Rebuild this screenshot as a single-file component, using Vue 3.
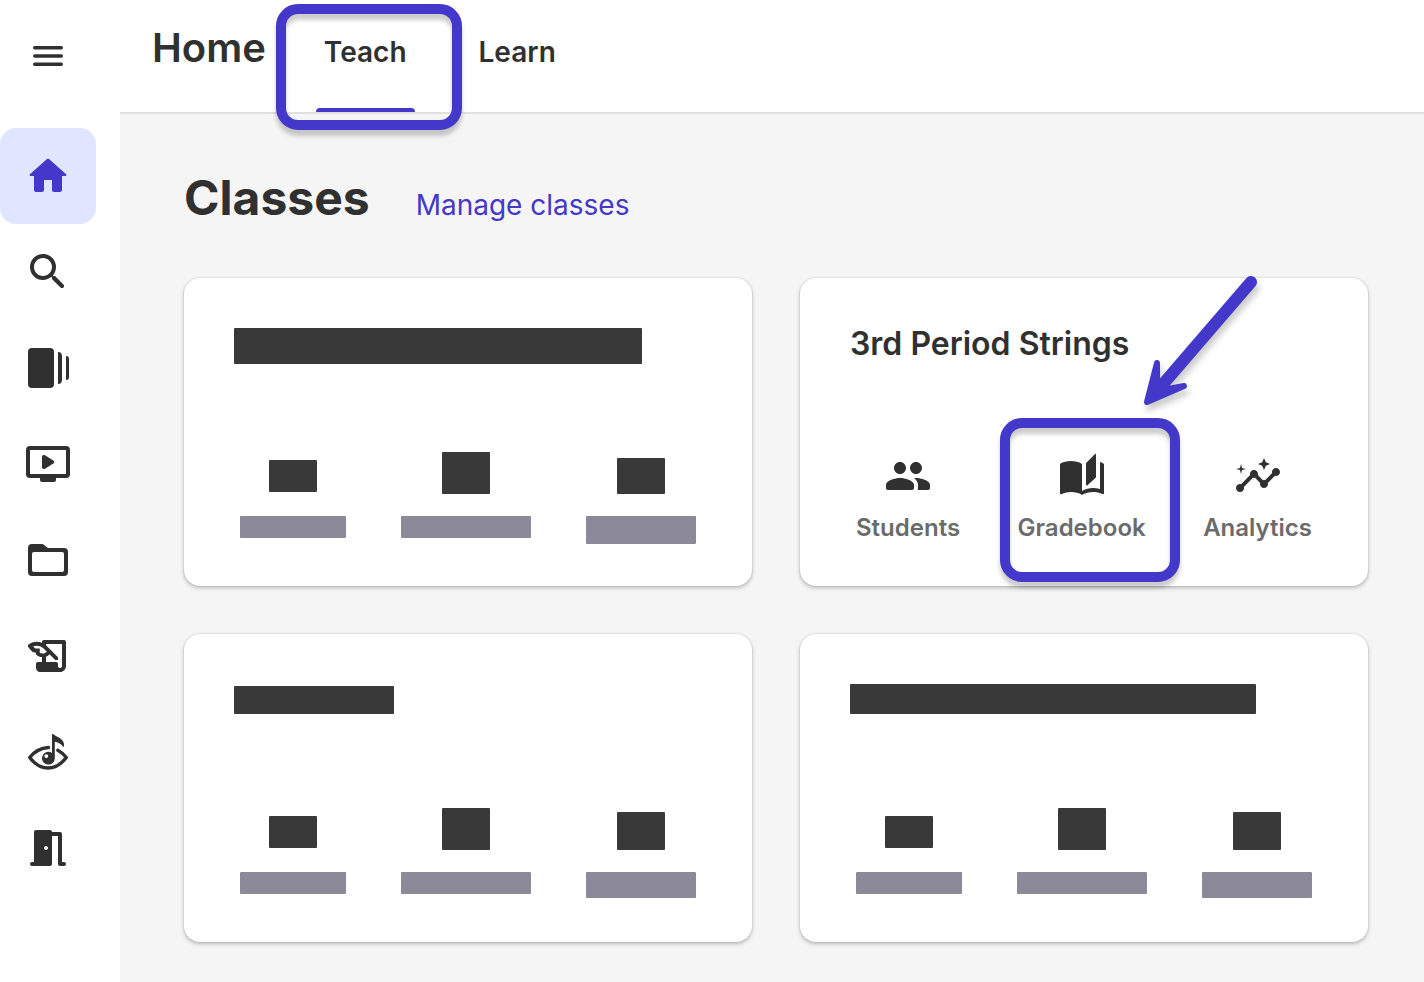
<script setup>
const tabs = [
  { label: 'Teach', active: true },
  { label: 'Learn', active: false },
]

const navItems = [
  { id: 'home', label: 'Home', active: true },
  { id: 'search', label: 'Search' },
  { id: 'library', label: 'Library' },
  { id: 'videos', label: 'Videos' },
  { id: 'files', label: 'Files' },
  { id: 'scores', label: 'Composition' },
  { id: 'sight', label: 'Sight reading' },
  { id: 'rooms', label: 'Practice rooms' },
]

const columns = (thirdY, thirdH, thirdLabel) => [
  { y: 8, h: 32, w: 106, lh: 22 },
  { y: 0, h: 42, w: 130, lh: 22 },
  { y: thirdY, h: thirdH, w: 110, lh: thirdLabel },
]

const cards = [
  { id: 1, bar: { w: 408, y: 0, h: 36 }, blocks: columns(6, 36, 28) },
  { id: 2, title: '3rd Period Strings', actions: ['Students', 'Gradebook', 'Analytics'] },
  { id: 3, bar: { w: 160, y: 2, h: 28 }, blocks: columns(4, 38, 26) },
  { id: 4, bar: { w: 406, y: 0, h: 30 }, blocks: columns(4, 38, 26) },
]
</script>

<template>
  <div class="app">
    <nav class="sidebar" aria-label="Main">
      <button class="menu" type="button" aria-label="Menu">
        <svg class="icon" viewBox="0 0 48 48">
          <path d="M10.700 15.700h26.600M10.700 24h26.600M10.700 32.300h26.600" fill="none" stroke="currentColor" stroke-width="3.400" stroke-linecap="round" />
        </svg>
      </button>
      <a v-for="item in navItems" :key="item.id" href="#" class="nav-item" :class="{ active: item.active }" :aria-label="item.label">
        <svg v-if="item.id === 'home'" class="icon" viewBox="0 0 24 24">
          <path d="M10 19v-5h4v5c0 .55.45 1 1 1h3c.55 0 1-.45 1-1v-7h1.700c.46 0 .68-.57.33-.87L12.670 3.600c-.38-.34-.96-.34-1.340 0l-8.360 7.530c-.34.3-.13.87.33.87H5v7c0 .55.45 1 1 1h3c.55 0 1-.45 1-1z" />
        </svg>
        <svg v-else-if="item.id === 'search'" class="icon" viewBox="0 0 24 24">
          <path d="M15.500 14h-.79l-.28-.27c1.200-1.400 1.820-3.310 1.480-5.340-.47-2.780-2.790-5-5.590-5.340-4.230-.52-7.790 3.040-7.270 7.270.34 2.800 2.560 5.120 5.340 5.590 2.030.34 3.940-.28 5.340-1.480l.27.28v.79l4.250 4.250c.41.41 1.080.41 1.490 0 .41-.41.41-1.080 0-1.490L15.500 14zm-6 0C7.010 14 5 11.990 5 9.500S7.010 5 9.500 5 14 7.010 14 9.500 11.990 14 9.500 14z" />
        </svg>
        <svg v-else-if="item.id === 'library'" class="icon" viewBox="0 0 48 48">
          <rect x="4" y="4" width="26" height="40" rx="4" />
          <path d="M34 8c2.500 0 4 1.500 4 4v24c0 2.500-1.500 4-4 4zM42 12c2 0 3 1.200 3 3v18c0 1.800-1 3-3 3z" />
        </svg>
        <svg v-else-if="item.id === 'videos'" class="icon" viewBox="0 0 48 48">
          <rect x="4" y="8" width="40" height="28" rx="2" fill="none" stroke="currentColor" stroke-width="4" />
          <path d="M16 37h16v3a2 2 0 0 1-2 2H18a2 2 0 0 1-2-2zM18 17v10c0 1.800 1.500 2.600 3 1.800l8.300-5.200c1.200-.8 1.200-2.400 0-3.200L21 15.200c-1.500-.8-3 0-3 1.800z" />
        </svg>
        <svg v-else-if="item.id === 'files'" class="icon" viewBox="0 0 48 48">
          <path fill-rule="evenodd" d="M8 8h9.600c1.100 0 2 .4 2.800 1.200L24 12h16a4 4 0 0 1 4 4v20a4 4 0 0 1-4 4H8a4 4 0 0 1-4-4V12a4 4 0 0 1 4-4zM10 16a2 2 0 0 0-2 2v16c0 1.100.9 2 2 2h28a2 2 0 0 0 2-2V18a2 2 0 0 0-2-2z" />
        </svg>
        <svg v-else-if="item.id === 'scores'" class="icon" viewBox="0 0 24 24">
          <path d="M10 4c-.6 0-1 .4-1 1v.38c-.83-.33-1.720-.5-2.610-.5-1.400 0-2.800.4-4 1.250-.5.4-.6 1-.2 1.450L3.300 9c.5.600 1.200 1.150 2 1.260h.58v.31c0 .3.100.6.300.8.800.750 1.800 1.110 2.810 1.160V15H7c-.6 0-1 .4-1 1v2c0 1.100.9 2 2 2h10c1.660 0 3-1.340 3-3V5c0-.6-.4-1-1-1zM7.890 10.410V8.260H5.610L4.570 7.220C5.140 7 5.760 6.880 6.390 6.880c1.340 0 2.590.52 3.540 1.460l1.410 1.410-.2.2c-.51.51-1.190.8-1.920.8-.47 0-.93-.12-1.330-.34zM19 17c0 .55-.45 1-1 1s-1-.45-1-1v-1c0-.6-.4-1-1-1h-5v-2.590c.57-.23 1.100-.57 1.560-1.030l.2-.2L15.590 14H17v-1.410l-6-5.970V6h8z" />
        </svg>
        <svg v-else-if="item.id === 'sight'" class="icon" viewBox="0 0 48 48">
          <path d="M24.500 19.500C16.500 20 10 24 5.700 29.500 11 36.500 17 40 24 40s13-3.500 18.300-10.500c-2.500-3.200-5.300-5.600-8.500-7.300" fill="none" stroke="currentColor" stroke-width="3.400" stroke-linecap="round" stroke-linejoin="round" />
          <path fill-rule="evenodd" d="M28 6.500c.5-.8 1.200-.4 1.800 0 1.900 1.800 5 2.700 7.400 4.700 2.700 2.200 3.500 5.500 2.400 8-2-3.300-5.800-5-8.800-5.500V29.700A6.400 6.400 0 1 1 28 24.900zM22.300 26.200a1.900 1.900 0 1 0 .01 0z" />
        </svg>
        <svg v-else class="icon" viewBox="0 0 48 48">
          <path fill-rule="evenodd" d="M12 6h14a2 2 0 0 1 2 2h8a2 2 0 0 1 2 2v28h2a2 2 0 0 1 0 4h-4a2 2 0 0 1-2-2V12h-6v28a2 2 0 0 1-2 2H8a2 2 0 0 1 0-4h2V8a2 2 0 0 1 2-2zM22 22a2 2 0 1 0 .01 0z" />
        </svg>
      </a>
    </nav>

    <div class="content">
      <header class="topbar">
        <h1 class="page-title">Home</h1>
        <nav class="tabs" aria-label="Sections">
          <a v-for="tab in tabs" :key="tab.label" href="#" class="tab" :class="{ current: tab.active }">
            {{ tab.label }}
            <span v-if="tab.active" class="ring tab-ring"></span>
          </a>
        </nav>
      </header>

      <main class="main">
        <div class="heading">
          <h2 class="section-title">Classes</h2>
          <a href="#" class="manage">Manage classes</a>
        </div>

        <div class="cards">
          <section v-for="card in cards" :key="card.id" class="card">
            <div class="card-head">
              <h3 v-if="card.title" class="card-title">{{ card.title }}</h3>
              <svg v-else class="title-bar" height="40" :width="card.bar.w">
                <rect :y="card.bar.y" :width="card.bar.w" :height="card.bar.h" rx="1" />
              </svg>
            </div>
            <div v-if="card.actions" class="actions">
              <button v-for="action in card.actions" :key="action" type="button" class="action">
                <svg v-if="action === 'Students'" class="icon" viewBox="0 0 24 24">
                  <path d="M16 11c1.660 0 2.990-1.340 2.990-3S17.660 5 16 5s-3 1.340-3 3 1.340 3 3 3zm-8 0c1.660 0 2.990-1.340 2.990-3S9.660 5 8 5 5 6.340 5 8s1.340 3 3 3zm0 2c-2.330 0-7 1.170-7 3.500V18c0 .55.45 1 1 1h12c.55 0 1-.45 1-1v-1.500c0-2.330-4.670-3.500-7-3.500zm8 0c-.29 0-.62.02-.97.05.02.01.03.03.04.04 1.140.83 1.930 1.940 1.930 3.410V18c0 .35-.07.69-.18 1H22c.55 0 1-.45 1-1v-1.500c0-2.330-4.670-3.500-7-3.500z" />
                </svg>
                <svg v-else-if="action === 'Gradebook'" class="icon" viewBox="0 0 24 24">
                  <path d="M19 1.200c0-.3-.3-.4-.5-.2l-4.200 4.200c-.2.200-.3.400-.3.700v10.500c0 .4.400.5.600.3l4.100-3.700c.2-.2.300-.4.300-.6zM1 6v14.650c0 .25.25.5.5.5.1 0 .15-.05.25-.05C3.100 20.450 5.050 20 6.500 20c1.950 0 4.050.4 5.500 1.500 1.350-.85 3.800-1.500 5.500-1.500 1.650 0 3.350.3 4.750 1.050.1.050.15.050.25.050.25 0 .5-.25.5-.5V6c-.6-.45-1.250-.75-2-1v13.500c-1.100-.35-2.300-.5-3.500-.5-1.700 0-4.150.65-5.500 1.500V6c-1.450-1.100-3.550-1.500-5.500-1.500S2.450 4.900 1 6z" />
                </svg>
                <svg v-else class="icon" viewBox="0 0 24 24">
                  <path d="M21 8c-1.450 0-2.260 1.440-1.930 2.510l-3.550 3.560c-.3-.09-.74-.09-1.040 0l-2.550-2.550C12.270 10.450 11.460 9 10 9c-1.450 0-2.270 1.440-1.930 2.520l-4.560 4.550C2.440 15.740 1 16.550 1 18c0 1.100.9 2 2 2 1.450 0 2.260-1.440 1.930-2.510l4.550-4.560c.3.09.74.09 1.040 0l2.550 2.550C12.730 16.550 13.540 18 15 18c1.450 0 2.270-1.440 1.930-2.520l3.560-3.550C21.560 12.260 23 11.450 23 10c0-1.100-.9-2-2-2z" />
                  <path d="M15 9l.94-2.070L18 6l-2.060-.93L15 3l-.92 2.070L12 6l2.080.93zM3.500 11L4 9l2-.5L4 8l-.5-2L3 8l-2 .5L3 9z" />
                </svg>
                <span class="action-label">{{ action }}</span>
                <template v-if="action === 'Gradebook'">
                  <span class="ring action-ring"></span>
                  <svg class="arrow" viewBox="0 0 130 150" width="130" height="150">
                    <path d="M115 12L28 113" fill="none" stroke="currentColor" stroke-width="12" stroke-linecap="round" />
                    <path d="M11 132L21 93L21 116L27 120L48 116z" stroke="currentColor" stroke-width="6" stroke-linejoin="round" />
                  </svg>
                </template>
              </button>
            </div>
            <div v-else class="actions">
              <div v-for="(block, i) in card.blocks" :key="i" class="action">
                <svg class="icon block" viewBox="0 0 48 48">
                  <rect :y="block.y" width="48" :height="block.h" rx="1" />
                </svg>
                <span class="label-bar" :style="{ width: block.w + 'px', height: block.lh + 'px' }"></span>
              </div>
            </div>
          </section>
        </div>
      </main>
    </div>
  </div>
</template>

<style>
body {
  margin: 0;
  background: #fff;
}
</style>

<style scoped>
.app {
  display: flex;
  min-height: 100vh;
  font-family: Inter, "Liberation Sans", sans-serif;
  color: #303030;
}

a {
  color: inherit;
  text-decoration: none;
}

button {
  padding: 0;
  border: 0;
  background: none;
  color: inherit;
  font: inherit;
  cursor: pointer;
}

h1,
h2,
h3 {
  margin: 0;
}

.icon {
  display: block;
  width: 48px;
  height: 48px;
  fill: currentColor;
}

.sidebar {
  flex: none;
  width: 120px;
}

.menu,
.nav-item {
  display: flex;
  align-items: center;
  justify-content: center;
  width: 96px;
  height: 96px;
}

.menu {
  height: 112px;
  margin-bottom: 16px;
}

.nav-item.active {
  border-radius: 16px;
  background: #e0e6ff;
  color: #4338ca;
}

.content {
  flex: 1;
  min-width: 0;
  display: flex;
  flex-direction: column;
}

.topbar {
  display: flex;
  gap: 50px;
  height: 112px;
  padding-left: 32px;
  border-bottom: 2px solid #e0e0e0;
}

.page-title {
  font-size: 40px;
  line-height: 96px;
  font-weight: 600;
}

.tabs {
  display: flex;
  gap: 56px;
}

.tab {
  position: relative;
  box-sizing: border-box;
  height: 112px;
  padding: 0 8px;
  font-size: 28px;
  line-height: 104px;
  font-weight: 600;
}

.tab.current::after {
  content: "";
  position: absolute;
  left: 0;
  right: 0;
  bottom: 0;
  height: 4px;
  border-radius: 4px 4px 0 0;
  background: #4338ca;
}

.ring {
  position: absolute;
  z-index: 2;
  border: 10px solid #4338ca;
  border-radius: 22px;
  filter: drop-shadow(0 6px 2px rgba(0, 0, 0, 0.2));
  pointer-events: none;
}

.tab-ring {
  inset: 4px -47px -18px -40px;
}

.main {
  flex: 1;
  padding: 56px 56px 40px 64px;
  background: #f5f5f5;
}

.heading {
  display: flex;
  align-items: baseline;
  gap: 46px;
  margin-bottom: 52px;
}

.section-title {
  font-size: 48px;
  line-height: 56px;
  font-weight: 700;
}

.manage {
  font-size: 28px;
  line-height: 32px;
  font-weight: 400;
  color: #4338ca;
}

.cards {
  display: grid;
  grid-template-columns: 1fr 1fr;
  gap: 48px;
}

.card {
  box-sizing: border-box;
  min-height: 308px;
  padding: 50px 56px 40px 50px;
  border-radius: 16px;
  background: #fff;
  box-shadow: 0 2px 4px rgba(0, 0, 0, 0.24), 0 0 2px rgba(0, 0, 0, 0.16);
}

.card-head {
  height: 40px;
  margin-bottom: 84px;
}

.card-title {
  font-size: 32px;
  line-height: 32px;
  font-weight: 600;
}

.title-bar {
  display: block;
  fill: #393939;
}

.actions {
  display: flex;
  justify-content: space-between;
  align-items: flex-start;
  padding-left: 6px;
}

.action {
  position: relative;
  display: flex;
  flex-direction: column;
  align-items: center;
  gap: 16px;
}

.action-label {
  font-size: 24px;
  line-height: 24px;
  font-weight: 600;
  color: #6b6b6b;
}

.block {
  color: #393939;
}

.label-bar {
  border-radius: 1px;
  background: #8c8a98;
}

.action-ring {
  inset: -34px -34px -42px -18px;
}

.arrow {
  position: absolute;
  z-index: 3;
  left: 118px;
  top: -182px;
  color: #4338ca;
  fill: currentColor;
  overflow: visible;
  filter: drop-shadow(2px 6px 3px rgba(0, 0, 0, 0.2));
  pointer-events: none;
}
</style>
